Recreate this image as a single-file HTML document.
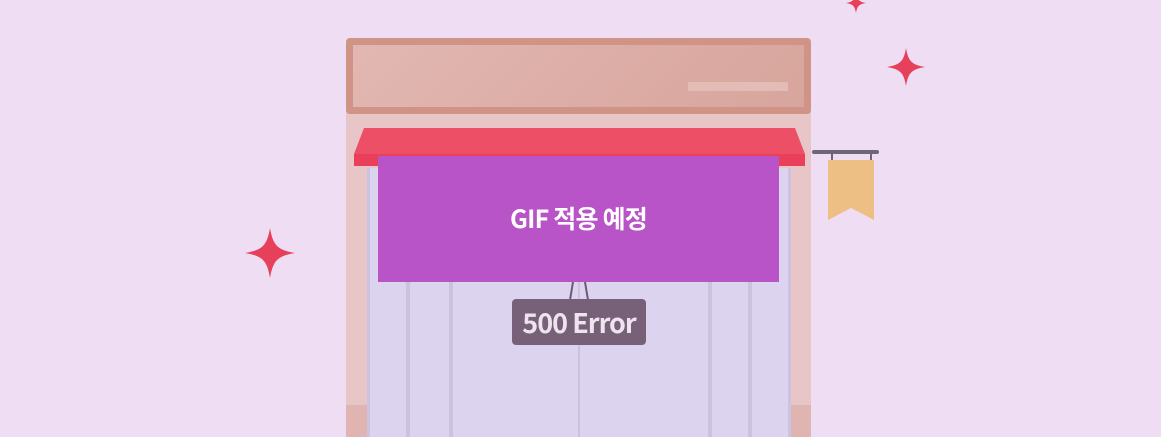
<!DOCTYPE html>
<html><head><meta charset="utf-8"><style>
body{margin:0;width:1161px;height:437px;overflow:hidden;background:#efdef3;position:relative;font-family:"Noto Sans CJK KR","Liberation Sans",sans-serif}
div{position:absolute;box-sizing:border-box}
</style></head><body>
<svg style="position:absolute;left:0;top:0" width="1161" height="437">
<defs><path id="s" d="M0,-1 C0.12,-0.3 0.3,-0.12 1,0 C0.3,0.12 0.12,0.3 0,1 C-0.12,0.3 -0.3,0.12 -1,0 C-0.3,-0.12 -0.12,-0.3 0,-1Z"/></defs>
<use href="#s" transform="translate(270,253) scale(25)" fill="#e6405a"/>
<use href="#s" transform="translate(906,67) scale(19)" fill="#e6405a"/>
<use href="#s" transform="translate(856,3) scale(10)" fill="#e6405a"/>
</svg>
<div style="left:346px;top:100px;width:465px;height:337px;background:#e8c5c6"></div>
<div style="left:346px;top:405px;width:465px;height:32px;background:#e0b4b0"></div>
<div style="left:346px;top:38px;width:465px;height:76px;background:#cf9486;border-radius:4px"></div>
<div style="left:353px;top:45px;width:451px;height:62px;background:linear-gradient(135deg,#e2b7b2,#d7a59c)"></div>
<div style="left:688px;top:82px;width:100px;height:9px;background:#e3bcb6"></div>
<div style="left:367px;top:168px;width:424px;height:269px;background:#dcd4ef;border-left:3px solid #ccc3e2;border-right:3px solid #ccc3e2"></div>
<div style="left:406px;top:190px;width:4px;height:247px;background:#cbc2df"></div>
<div style="left:449px;top:190px;width:4px;height:247px;background:#cbc2df"></div>
<div style="left:578px;top:190px;width:2px;height:247px;background:#cbc2df"></div>
<div style="left:708px;top:190px;width:4px;height:247px;background:#cbc2df"></div>
<div style="left:748px;top:190px;width:4px;height:247px;background:#cbc2df"></div>
<svg style="position:absolute;left:352px;top:126px" width="455" height="44"><path d="M12,2 H443 L453,28 V40 H2 V28 Z" fill="#ec4f66"/><rect x="2" y="28" width="451" height="12" fill="#ea3f58"/></svg>
<div style="left:378px;top:156px;width:401px;height:126px;background:#b853c8;color:#fff;font-weight:bold;font-size:25px;text-align:center;line-height:124px;letter-spacing:-0.8px">GIF 적용 예정</div>
<svg style="position:absolute;left:560px;top:280px" width="40" height="22"><path d="M10,20 L13,2 M28,20 L25,2" stroke="#6b5a73" stroke-width="2" fill="none"/></svg>
<div style="left:512px;top:299px;width:134px;height:46px;background:#776179;border-radius:4px;color:#eee3ee;font-weight:bold;font-size:27px;text-align:center;line-height:46px;letter-spacing:-1px">500 Error</div>
<div style="left:812px;top:150px;width:67px;height:4px;background:#6f6578;border-radius:2px"></div>
<div style="left:831px;top:153px;width:2px;height:8px;background:#6f6578"></div>
<div style="left:870px;top:153px;width:2px;height:8px;background:#6f6578"></div>
<svg style="position:absolute;left:828px;top:160px" width="47" height="62"><path d="M0,0 H46 V60 L23,48 L0,60Z" fill="#eebf85"/></svg>
</body></html>
